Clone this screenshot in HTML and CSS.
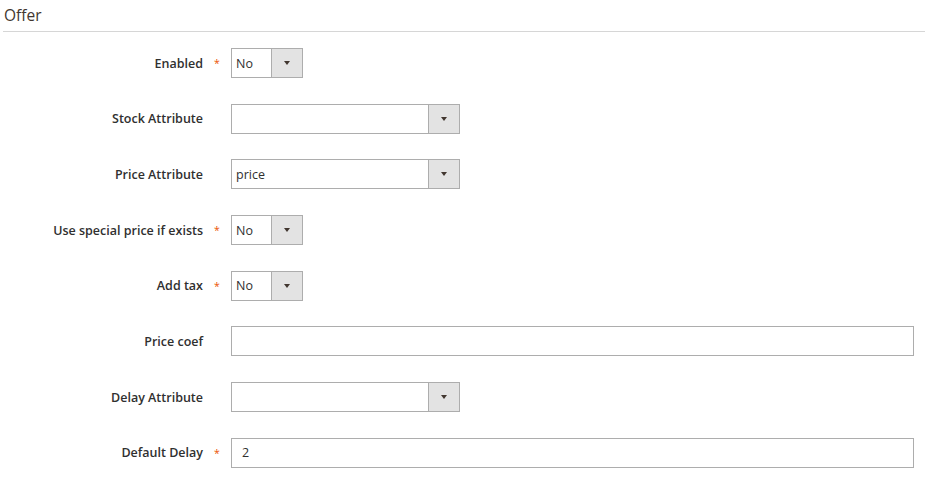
FILE: index.html
```html
<!DOCTYPE html>
<html lang="en">
<head>
  <meta charset="UTF-8">
  <title>Offer</title>
  <link rel="stylesheet" href="styles.css">
</head>
<body>

<div class="fieldset">
  <div class="legend">Offer</div>

  <div class="field">
    <label class="field-label"><span>Enabled</span><span class="req">*</span></label>
    <div class="select small"><span class="value">No</span><span class="btn"><i class="arrow"></i></span></div>
  </div>

  <div class="field">
    <label class="field-label"><span>Stock Attribute</span><span class="req"></span></label>
    <div class="select wide"><span class="value"></span><span class="btn"><i class="arrow"></i></span></div>
  </div>

  <div class="field">
    <label class="field-label"><span>Price Attribute</span><span class="req"></span></label>
    <div class="select wide"><span class="value">price</span><span class="btn"><i class="arrow"></i></span></div>
  </div>

  <div class="field">
    <label class="field-label"><span>Use special price if exists</span><span class="req">*</span></label>
    <div class="select small"><span class="value">No</span><span class="btn"><i class="arrow"></i></span></div>
  </div>

  <div class="field">
    <label class="field-label"><span>Add tax</span><span class="req">*</span></label>
    <div class="select small"><span class="value">No</span><span class="btn"><i class="arrow"></i></span></div>
  </div>

  <div class="field">
    <label class="field-label"><span>Price coef</span><span class="req"></span></label>
    <div class="text-input"></div>
  </div>

  <div class="field">
    <label class="field-label"><span>Delay Attribute</span><span class="req"></span></label>
    <div class="select wide"><span class="value"></span><span class="btn"><i class="arrow"></i></span></div>
  </div>

  <div class="field">
    <label class="field-label"><span>Default Delay</span><span class="req">*</span></label>
    <div class="text-input">2</div>
  </div>
</div>

</body>
</html>
```

FILE: styles.css
```css
body {
  margin: 0;
  background: #fff;
  font-family: "Open Sans", Arial, sans-serif;
  color: #303030;
}
.fieldset {
  padding-right: 11px;
}
.legend {
  margin: 0 -11px 16px 3px;
  padding: 4px 0 0 1px;
  height: 32px;
  box-sizing: border-box;
  border-bottom: 1px solid #d6d6d6;
  font-size: 15.5px;
  color: #41362f;
}
.field {
  display: flex;
  align-items: center;
  margin-bottom: 25.7px;
}
.field-label {
  width: 231px;
  flex: none;
  display: flex;
  justify-content: flex-end;
  align-items: center;
  font-size: 12.5px;
  font-weight: 600;
}
.req {
  width: 28px;
  text-align: center;
  color: #eb5202;
  font-size: 10.5px;
  font-weight: 400;
}
.select, .text-input {
  height: 30px;
  box-sizing: border-box;
  border: 1px solid #adadad;
  background: #fff;
  font-size: 12.5px;
  display: flex;
  align-items: center;
}
.select.small {
  width: 72px;
}
.select.wide {
  width: 229px;
}
.select .value {
  flex: 1;
  padding-left: 4px;
}
.select .btn {
  width: 30px;
  height: 100%;
  background: #e3e3e3;
  border-left: 1px solid #adadad;
  display: flex;
  align-items: center;
  justify-content: center;
}
.arrow {
  width: 0;
  height: 0;
  border-left: 3.5px solid transparent;
  border-right: 3.5px solid transparent;
  border-top: 4px solid #41362f;
}
.text-input {
  flex: 1;
  padding-left: 10px;
}
```
